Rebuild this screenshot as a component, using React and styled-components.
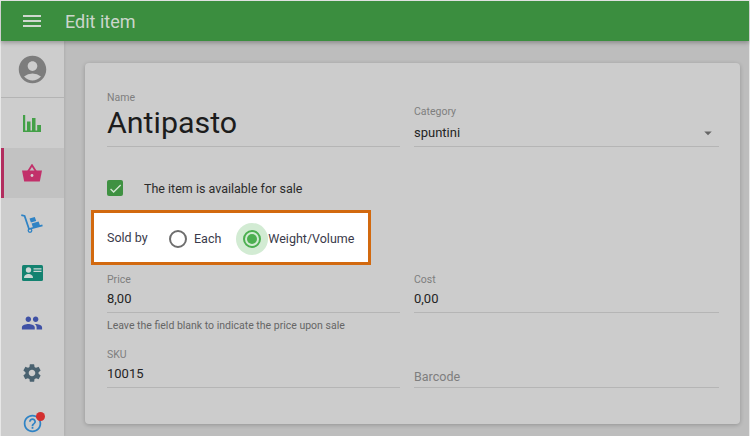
import React from "react";
import styled, { createGlobalStyle } from "styled-components";
import { MdMenu, MdAccountCircle, MdPeople, MdSettings, MdHelpOutline, MdArrowDropDown, MdCheck } from "react-icons/md";

const Global = createGlobalStyle`
  html, body { margin: 0; padding: 0; width: 750px; height: 436px; overflow: hidden; background: #e8e8e8; }
  * { box-sizing: border-box; }
  body { font-family: Roboto, "Liberation Sans", sans-serif; }
`;
const Page = styled.div`
  width: 750px; height: 436px; padding: 1px 1px 0; display: flex; flex-direction: column; overflow: hidden;
`;
const AppBar = styled.header`
  height: 40px; flex: none; background: #3b8e3f; display: flex; align-items: center; color: #cfd8cf;
  box-shadow: 0 2px 4px rgba(0,0,0,.25); position: relative; z-index: 2;
`;
const MenuButton = styled.div`
  width: 62px; display: flex; justify-content: center; font-size: 24px; line-height: 0; margin-right: 2px;
`;
const Title = styled.h1`
  margin: 0; font-size: 18px; font-weight: 400; color: #ccd6cc;
`;
const Body = styled.div`
  flex: 1; display: flex; min-height: 0; background: #bdbdbd;
`;
const Sidebar = styled.nav`
  width: 63px; flex: none; background: #cdcdcd; display: flex; flex-direction: column;
  box-shadow: 1px 0 2px rgba(0,0,0,.08);
`;
const Avatar = styled.div`
  height: 57px; flex: none; border-bottom: 1px solid #b4b4b4; display: flex; align-items: center; justify-content: center;
  color: #7d7d7d; font-size: 33px; line-height: 0; padding-right: 1px;
`;
const NavItem = styled.div`
  height: 50px; flex: none; display: flex; align-items: center; justify-content: center; position: relative;
  line-height: 0; font-size: ${p => p.$size || 22}px; color: ${p => p.$color};
  background: ${p => (p.$active ? "#c2c2c2" : "transparent")};
  border-left: 3px solid ${p => (p.$active ? "#b22d5e" : "transparent")};
  padding-right: 4px;
`;
const Dot = styled.span`
  position: absolute; width: 9px; height: 9px; border-radius: 50%; background: #d32f2f; top: 14px; left: 32px;
`;
const Main = styled.main`
  flex: 1; padding: 22px 9px 0 21px; min-width: 0;
`;
const Card = styled.section`
  height: 361px; background: #cccccc; border-radius: 4px; box-shadow: 0 1px 4px rgba(0,0,0,.22);
  padding: 0 21px 0 22px; display: flex; flex-direction: column;
`;
const Row = styled.div`
  display: grid; grid-template-columns: 293px 305px; column-gap: 14px; align-items: end; flex: none;
`;
const Field = styled.div`
  height: ${p => p.$h}px; border-bottom: 1px solid #b5b5b5; display: flex; flex-direction: column; justify-content: flex-end; position: relative;
`;
const Label = styled.label`
  font-size: 10.5px; line-height: 12px; color: #7e7e7e; display: block;
`;
const Value = styled.div`
  font-size: 13px; line-height: 16px; color: #242424; margin: ${p => p.$gap || 5}px 0 5px;
`;
const BigValue = styled.div`
  font-size: 30.4px; line-height: 36px; color: #1c1c1c; margin: 1px 0 5px;
`;
const Arrow = styled.span`
  position: absolute; right: 2px; bottom: 4px; font-size: 18px; line-height: 0; color: #666;
`;
const CheckRow = styled.div`
  display: flex; align-items: center; margin-top: 32px; height: 18px; flex: none;
`;
const CheckBox = styled.span`
  width: 16px; height: 16px; border-radius: 2px; background: #3f9142; color: #d5e6d5; display: flex; align-items: center; justify-content: center;
  font-size: 15px; line-height: 0; margin-right: 21px;
`;
const CheckText = styled.span`
  font-size: 12.5px; color: #2b2b2b;
`;
const Highlight = styled.div`
  flex: none; width: 280px; height: 55px; margin: 13px 0 0 -16px; background: #fff; border: 3px solid #d2690f;
  display: flex; align-items: center; padding: 2px 0 0 13px; font-size: 12.5px; color: #3a3a4a;
`;
const SoldBy = styled.span`
  width: 62px; margin-top: -2px;
`;
const Radio = styled.span`
  width: 18px; height: 18px; border-radius: 50%; border: 2px solid ${p => (p.$on ? "#4caf50" : "#6e6e6e")};
  display: flex; align-items: center; justify-content: center; flex: none; position: relative; z-index: 0;
  &::before {
    content: ""; display: ${p => (p.$on ? "block" : "none")}; width: 10px; height: 10px; border-radius: 50%; background: #4caf50;
  }
  &::after {
    content: ""; display: ${p => (p.$on ? "block" : "none")}; position: absolute; left: -9px; top: -9px; width: 32px; height: 32px;
    border-radius: 50%; background: #4caf50; opacity: .25; z-index: -1;
  }
`;
const RadioText = styled.span`
  margin-left: ${p => p.$gap}px; margin-right: ${p => p.$after || 0}px;
`;
const Helper = styled.div`
  font-size: 10.5px; line-height: 12px; color: #666; margin-top: 7px; flex: none;
`;
const BarcodeLabel = styled.div`
  font-size: 12.5px; line-height: 16px; color: #7e7e7e; margin-bottom: 2px;
`;

const Bars = () => (
  <svg width="18" height="17" viewBox="0 0 18 17" fill="#43a047"><path d="M0 0h2.2v15.5H18V17H0zM4 6.5h3.5v9H4zM9 3h3.5v12.5H9zM14.2 10H18v5.5h-3.8z"/></svg>
);
const Basket = () => (
  <svg width="20" height="18" viewBox="0 0 20 18"><path d="M0 6.5h20l-2.2 11H2.2z" fill="#c2306a"/><path d="M6 7.5 10 1.2l4 6.3" fill="none" stroke="#c2306a" strokeWidth="1.8"/><circle cx="10" cy="11.5" r="1.4" fill="#d8d0d4"/></svg>
);
const Dolly = () => (
  <svg width="22" height="19" viewBox="0 0 22 19" fill="none"><path d="M0.3 1.2 3.6 2 8 15 21.5 11.3" stroke="#2f83c5" strokeWidth="1.8"/><circle cx="9" cy="16.5" r="1.8" stroke="#2f83c5" strokeWidth="1.3"/><path d="M8.5 4.5l5.3-1.6 1.4 4-5.3 1.6zM10.6 9.6l7-2.2 1.5 4.4-7 2.1z" fill="#2f83c5"/></svg>
);
const Badge = () => (
  <svg width="21" height="16" viewBox="0 0 21 16"><rect width="21" height="16" rx="1.5" fill="#138270"/><circle cx="6.5" cy="5" r="2.7" fill="#cfd8d6"/><path d="M2 13c0-3 2.5-4 4.5-4S11 10 11 13z" fill="#cfd8d6"/><path d="M11.5 3.8h8M11.5 6.4h8" stroke="#cfd8d6" strokeWidth="1.3"/></svg>
);

export default function App() {
  return (
    <Page>
      <Global />
      <AppBar>
        <MenuButton><MdMenu /></MenuButton>
        <Title>Edit item</Title>
      </AppBar>
      <Body>
        <Sidebar>
          <Avatar><MdAccountCircle /></Avatar>
          <NavItem><Bars /></NavItem>
          <NavItem $active><Basket /></NavItem>
          <NavItem><Dolly /></NavItem>
          <NavItem><Badge /></NavItem>
          <NavItem $color="#3f51a5"><MdPeople /></NavItem>
          <NavItem $color="#4a6270"><MdSettings /></NavItem>
          <NavItem $color="#2f83c5" $size={21}><MdHelpOutline /><Dot /></NavItem>
        </Sidebar>
        <Main>
          <Card>
            <Row>
              <Field $h={84}>
                <Label>Name</Label>
                <BigValue>Antipasto</BigValue>
              </Field>
              <Field $h={84}>
                <Label>Category</Label>
                <Value $gap={7}>spuntini</Value>
                <Arrow><MdArrowDropDown /></Arrow>
              </Field>
            </Row>
            <CheckRow>
              <CheckBox><MdCheck /></CheckBox>
              <CheckText>The item is available for sale</CheckText>
            </CheckRow>
            <Highlight>
              <SoldBy>Sold by</SoldBy>
              <Radio />
              <RadioText $gap={7} $after={22}>Each</RadioText>
              <Radio $on />
              <RadioText $gap={7}>Weight/Volume</RadioText>
            </Highlight>
            <Row>
              <Field $h={48}>
                <Label>Price</Label>
                <Value>8,00</Value>
              </Field>
              <Field $h={48}>
                <Label>Cost</Label>
                <Value>0,00</Value>
              </Field>
            </Row>
            <Helper>Leave the field blank to indicate the price upon sale</Helper>
            <Row>
              <Field $h={56}>
                <Label>SKU</Label>
                <Value>10015</Value>
              </Field>
              <Field $h={56}>
                <BarcodeLabel>Barcode</BarcodeLabel>
              </Field>
            </Row>
          </Card>
        </Main>
      </Body>
    </Page>
  );
}
